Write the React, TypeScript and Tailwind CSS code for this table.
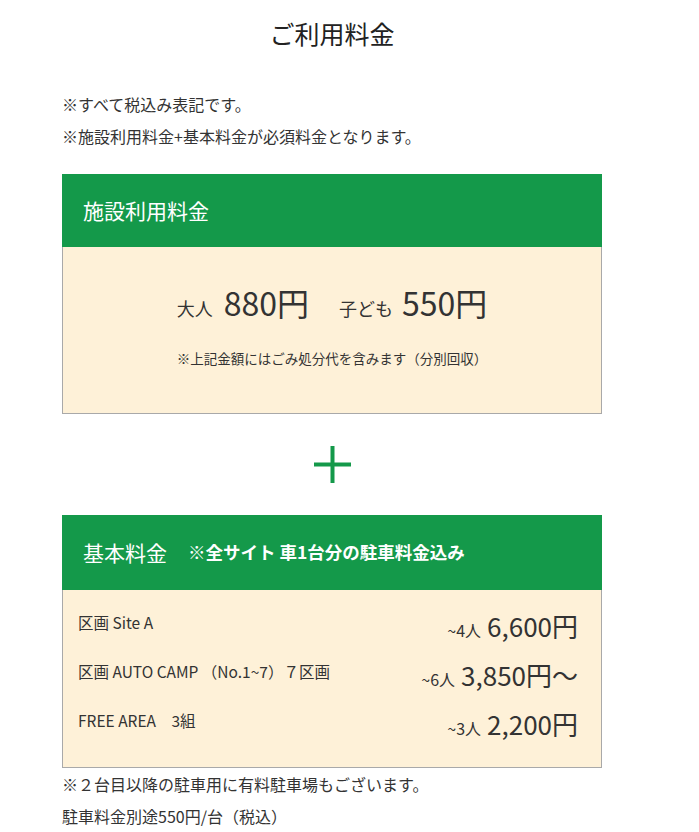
import React from 'react';

const FONT = { fontFamily: '"Noto Sans CJK JP", "Noto Sans", sans-serif' };

const SITES = [
  { name: '区画 Site A', cap: '~4人', price: '6,600円' },
  { name: '区画 AUTO CAMP （No.1~7）７区画', cap: '~6人', price: '3,850円〜' },
  { name: 'FREE AREA　3組', cap: '~3人', price: '2,200円' },
];

export default function App() {
  return (
    <div className="w-[699px] bg-white text-[#333]" style={FONT}>
      <div className="w-[540px] ml-[62px]">
        <h1 className="pt-[14px] text-center text-[25px] leading-[38px] text-[#222]">ご利用料金</h1>

        {/* Notes */}
        <div className="mt-[36px] text-[16px] leading-[32px]">
          <p>※すべて税込み表記です。</p>
          <p>※施設利用料金+基本料金が必須料金となります。</p>
        </div>

        {/* 施設利用料金 */}
        <div className="mt-[22px]">
          <div className="h-[73px] bg-[#14994a] px-[21px] flex items-center text-white text-[21px]">
            施設利用料金
          </div>
          <div className="h-[167px] bg-[#fef1d8] border border-t-0 border-[#a9a9a9] flex flex-col items-center">
            <div className="mt-[31px] flex items-baseline text-[#333]">
              <span className="text-[18px]">大人</span>
              <span className="ml-[11px] text-[32px]">880円</span>
              <span className="ml-[30px] text-[18px]">子ども</span>
              <span className="ml-[9px] text-[32px]">550円</span>
            </div>
            <p className="mt-[22px] text-[13.5px] text-[#333]">※上記金額にはごみ処分代を含みます（分別回収）</p>
          </div>
        </div>

        {/* Plus */}
        <div className="h-[101px] flex items-center justify-center">
          <svg width="37" height="37" viewBox="0 0 37 37" className="ml-[1px]">
            <rect x="0" y="16.5" width="37" height="4" fill="#14994a" />
            <rect x="16.5" y="0" width="4" height="37" fill="#14994a" />
          </svg>
        </div>

        {/* 基本料金 */}
        <div>
          <div className="h-[75px] bg-[#14994a] px-[21px] flex items-center gap-[21px] text-white">
            <span className="text-[21px]">基本料金</span>
            <span className="text-[17.5px] font-bold">※全サイト 車1台分の駐車料金込み</span>
          </div>
          <div className="h-[178px] bg-[#fef1d8] border border-t-0 border-[#a9a9a9] pt-[15px] pl-[15px] pr-[23px] flex flex-col gap-[9px]">
            {SITES.map(s => (
              <div key={s.name} className="h-[40px] flex items-center justify-between">
                <span className="text-[15.5px] -mt-[4px]">{s.name}</span>
                <span className="flex items-baseline">
                  <span className="text-[16px]">{s.cap}</span>
                  <span className="ml-[6px] text-[26px]">{s.price}</span>
                </span>
              </div>
            ))}
          </div>
        </div>

        <div className="text-[16px] leading-[32px]">
          <p>※２台目以降の駐車用に有料駐車場もございます。</p>
          <p>駐車料金別途550円/台（税込）</p>
        </div>
      </div>
    </div>
  );
}
